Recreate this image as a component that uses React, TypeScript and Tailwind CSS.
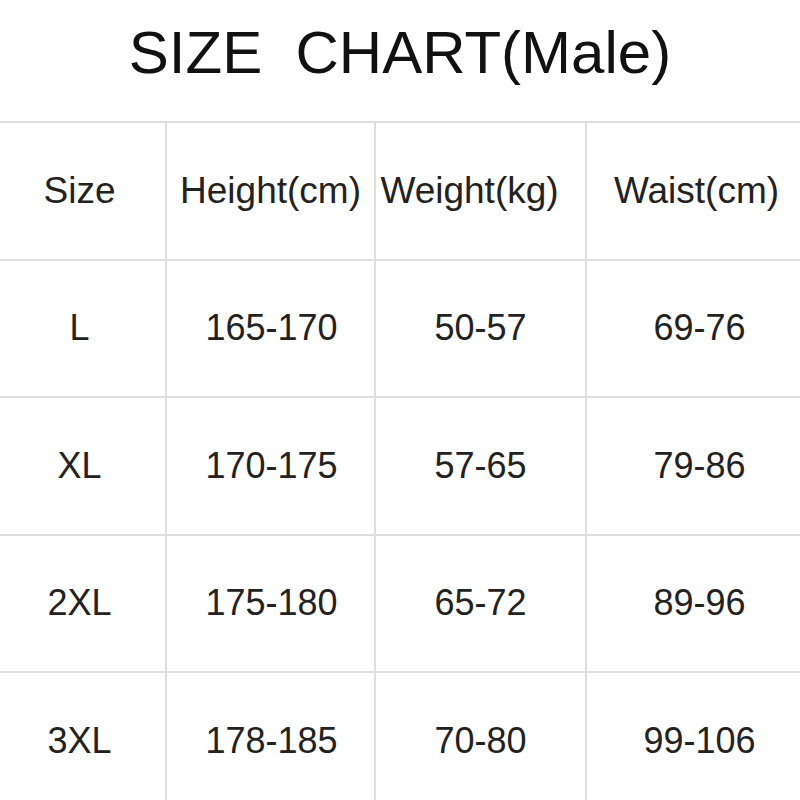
const headers = ["Size", "Height(cm)", "Weight(kg)", "Waist(cm)"];

const rows = [
  ["L", "165-170", "50-57", "69-76"],
  ["XL", "170-175", "57-65", "79-86"],
  ["2XL", "175-180", "65-72", "89-96"],
  ["3XL", "178-185", "70-80", "99-106"],
];

// small nudges so text sits where it does in the original chart
const headerPad = ["pr-[6px]", "", "pr-[22px]", "pl-[6px]"];
const dataPad = ["pr-[6px]", "pl-[2px]", "", "pl-[12px]"];

function Row({ cells, header }: { cells: string[]; header?: boolean }) {
  const pads = header ? headerPad : dataPad;
  return (
    <div className="grid h-[137.5px] grid-cols-[165px_209px_211px_215px] border-t-2 border-[#dedede]">
      {cells.map((c, i) => (
        <div
          key={i}
          className={
            "flex items-center justify-center text-[#222] " +
            (i > 0 ? "border-l-2 border-[#dedede] " : "") +
            (header ? "text-[37px] " : "text-[36px] ") +
            pads[i]
          }
        >
          {c}
        </div>
      ))}
    </div>
  );
}

export default function App() {
  return (
    <div className="h-[800px] w-[800px] overflow-hidden bg-white font-['Liberation_Sans',Arial,sans-serif]">
      <div className="flex h-[121px] items-center justify-center pb-[16px] text-[60px] text-[#111]">
        <span className="whitespace-pre">SIZE  CHART(Male)</span>
      </div>
      <Row cells={headers} header />
      {rows.map((r) => (
        <Row key={r[0]} cells={r} />
      ))}
    </div>
  );
}
